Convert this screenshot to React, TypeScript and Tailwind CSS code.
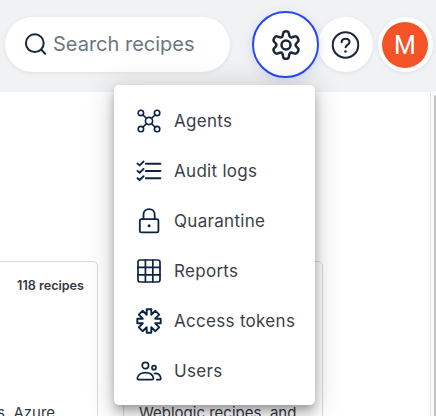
import type { ReactNode } from "react";

const stroke = {
  fill: "none",
  stroke: "currentColor",
  strokeLinecap: "round" as const,
  strokeLinejoin: "round" as const,
};

function SearchIcon() {
  return (
    <svg width="24" height="24" viewBox="0 0 24 24" {...stroke} strokeWidth="2" className="shrink-0">
      <circle cx="10.8" cy="10.2" r="8.9" />
      <path d="M17.2 16.6 21.2 20.8" />
    </svg>
  );
}

function GearIcon() {
  return (
    <svg width="32" height="32" viewBox="-16 -16 32 32" {...stroke} strokeWidth="2.5">
      <circle r="4.5" />
      <path d="M-2.7-12.2C-2.3-14.3 2.3-14.3 2.7-12.2L3.4-9.1C3.8-7.8 4.9-7.4 6.1-7.7L8.9-8.6C11-9.1 13.5-5 12-3.5L10.3-1.5C9.4-.6 9.4.6 10.3 1.5L12 3.5C13.5 5 11 9.1 8.9 8.6L6.1 7.7C4.9 7.4 3.8 7.8 3.4 9.1L2.7 12.2C2.3 14.3-2.3 14.3-2.7 12.2L-3.4 9.1C-3.8 7.8-4.9 7.4-6.1 7.7L-8.9 8.6C-11 9.1-13.5 5-12 3.5L-10.3 1.5C-9.4.6-9.4-.6-10.3-1.5L-12-3.5C-13.5-5-11-9.1-8.9-8.6L-6.1-7.7C-4.9-7.4-3.8-7.8-3.4-9.1Z" />
    </svg>
  );
}

function HelpIcon() {
  return (
    <svg width="28" height="28" viewBox="-14 -14 28 28" {...stroke} strokeWidth="2.1" className="-translate-x-[0.5px]">
      <circle r="12.8" />
      <path d="M-3.9-2.9C-3.7-5.2-2.2-6.3 0-6.3C2.4-6.3 4-4.9 4-2.8C4-.2.1-.2.1 2.3" />
      <circle cx="0" cy="6.5" r="1.3" fill="currentColor" stroke="none" />
    </svg>
  );
}

function MenuSvg({ children, width = 1.7 }: { children: ReactNode; width?: number }) {
  return (
    <svg width="28" height="28" viewBox="-14 -14 28 28" {...stroke} strokeWidth={width} className="-mt-px shrink-0">
      {children}
    </svg>
  );
}

const items = [
  {
    label: "Agents",
    icon: (
      <MenuSvg width={1.6}>
        <circle r="3.6" />
        <circle cx="-8.1" cy="-8.1" r="2.7" />
        <circle cx="8.1" cy="-8.1" r="2.7" />
        <circle cx="-8.1" cy="8.1" r="2.7" />
        <circle cx="8.1" cy="8.1" r="2.7" />
        <path d="M-6.2-6.2-2.6-2.6M6.2-6.2 2.6-2.6M-6.2 6.2-2.6 2.6M6.2 6.2 2.6 2.6" />
      </MenuSvg>
    ),
  },
  {
    label: "Audit logs",
    icon: (
      <MenuSvg width={1.9}>
        <path d="M-3.2-7.3H11.4M-3.2 0H11.4M-3.2 7.3H11.4" />
        <path d="M-11.5-7.4-9.4-5.6-5.4-9.4M-11.5-.1-9.4 1.7-5.4-2.1M-11.5 7.2-9.4 9-5.4 5.2" />
      </MenuSvg>
    ),
  },
  {
    label: "Quarantine",
    icon: (
      <MenuSvg width={1.8}>
        <rect x="-9.2" y="-1.8" width="18.6" height="13.2" rx="1.5" />
        <path d="M-5.5-1.8V-6.4C-5.5-13.8 5.7-13.8 5.7-6.4V-1.8" />
        <circle cx=".1" cy="4.8" r="1.5" fill="currentColor" stroke="none" />
      </MenuSvg>
    ),
  },
  {
    label: "Reports",
    icon: (
      <MenuSvg width={1.7}>
        <rect x="-11" y="-11" width="22" height="22" rx="2.2" />
        <path d="M-3.6-11V11M3.8-11V11M-11-3.6H11M-11 3.8H11" />
      </MenuSvg>
    ),
  },
  {
    label: "Access tokens",
    icon: (
      <MenuSvg width={1.9}>
        <path d="M-2.3-11.7H2.3V-6.2L6.4-10.2 10.2-6.4 6.2-2.3H11.7V2.3H6.2L10.2 6.4 6.4 10.2 2.3 6.2V11.7H-2.3V6.2L-6.4 10.2-10.2 6.4-6.2 2.3H-11.7V-2.3H-6.2L-10.2-6.4-6.4-10.2-2.3-6.2Z" />
      </MenuSvg>
    ),
  },
  {
    label: "Users",
    icon: (
      <MenuSvg width={1.7}>
        <circle cx="-3.6" cy="-5.5" r="3.2" />
        <circle cx="5" cy="-3.3" r="2" />
        <path d="M-11.6 7C-11.1 3.5-7.5 1.6-3.6 1.6S3.8 3.5 4.4 7C4.6 8.2 4.1 8.7 3 8.7H-10.3C-11.4 8.7-11.8 8.2-11.6 7Z" />
        <path d="M5.4 2.5C8.6 2 11 4 11.7 6.7C12 8 11.5 8.7 10.4 8.7H7.8" />
      </MenuSvg>
    ),
  },
];

function Header() {
  return (
    <header className="flex h-[92px] items-center bg-[#f1f2f4] pb-[3px] pl-[5px] text-[#1c2638]">
      <div className="flex h-[55px] w-[225px] shrink-0 items-center rounded-full bg-white pl-[19px] shadow-[0_1px_4px_rgba(30,40,60,0.09)]">
        <SearchIcon />
        <span className="-mt-px ml-[5px] text-[20px] whitespace-nowrap text-[#6c7681]">Search recipes</span>
      </div>
      <button className="z-10 ml-[22px] grid size-[67px] shrink-0 place-items-center rounded-full border-2 border-[#2748f5] bg-white shadow-[0_3px_12px_rgba(39,72,245,0.14)]">
        <GearIcon />
      </button>
      <button className="-ml-px grid size-[55px] shrink-0 place-items-center rounded-full bg-white shadow-[0_1px_4px_rgba(30,40,60,0.09)]">
        <HelpIcon />
      </button>
      <div className="ml-[5px] flex size-[55px] shrink-0 items-center rounded-full bg-white pl-1 shadow-[0_1px_4px_rgba(30,40,60,0.09)]">
        <div className="grid size-[46px] place-items-center rounded-full bg-[#f45327] pt-px font-['Roboto',sans-serif] text-[25px] leading-none text-white">
          M
        </div>
      </div>
    </header>
  );
}

export default function App() {
  return (
    <div className="relative flex h-[416px] w-[436px] flex-col overflow-hidden bg-white font-['Inter',sans-serif]">
      <Header />
      <div className="flex min-h-0 flex-1">
        <main className="flex min-w-0 flex-1 items-start gap-[25px] pt-[169px] text-[#343a43]">
          <section className="flex h-[200px] w-[98px] shrink-0 flex-col rounded-tr-[5px] border-t border-r border-[#d9dbdd]">
            <p className="mt-[15px] mr-[13px] text-right text-[12.6px] leading-[18px] font-semibold whitespace-nowrap">118 recipes</p>
            <p className="mt-[107px] -ml-[3px] text-[15px] leading-[22px] whitespace-nowrap">s, Azure</p>
          </section>
          <section className="flex h-[200px] w-[200px] shrink-0 flex-col rounded-t-[5px] border border-[#d9dbdd]">
            <p className="mt-[140px] ml-[15px] text-[15px] leading-[22px] whitespace-nowrap">Weblogic recipes, and</p>
          </section>
        </main>
        <div className="flex w-[6px] shrink-0 justify-end border-l border-[#e2e2e2] bg-[#fafafa] pt-[3px]">
          <div className="h-full w-[2px] rounded-tl-[3px] bg-[#c1c1c1]" />
        </div>
      </div>
      <nav className="absolute top-[85px] left-[114px] z-20 flex h-[320px] w-[201px] flex-col rounded-[5px] bg-white pt-[11px] shadow-[0_5px_8px_-3px_rgba(0,0,0,0.25),0_8px_12px_1px_rgba(0,0,0,0.16),0_3px_26px_5px_rgba(0,0,0,0.13)]">
        {items.map((item) => (
          <a key={item.label} className="flex h-[50px] items-center pl-[21px] text-[#0c2444]">
            {item.icon}
            <span className="ml-[11px] pt-px text-[17px] tracking-[0.3px] whitespace-nowrap text-[#3a3f47]">{item.label}</span>
          </a>
        ))}
      </nav>
    </div>
  );
}
